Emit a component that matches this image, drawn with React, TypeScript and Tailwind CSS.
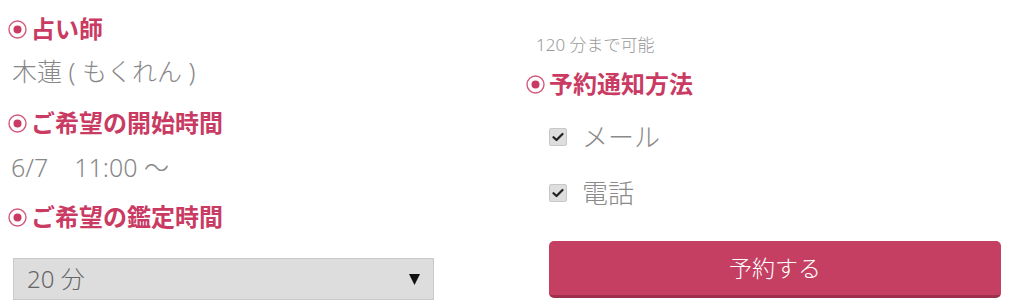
import { ReactNode } from "react"

const FONT = "font-['Noto_Sans','Noto_Sans_CJK_JP',sans-serif]"

function RadioMark() {
  return (
    <svg width="19" height="19" viewBox="0 0 19 19" className="shrink-0">
      <circle cx="9.5" cy="9.5" r="8.5" fill="none" stroke="#d5587c" strokeWidth="1.4" />
      <circle cx="9.5" cy="9.5" r="4" fill="#c93b63" />
    </svg>
  )
}

function Heading({ children, className = "" }: { children: ReactNode; className?: string }) {
  return (
    <div className={`flex items-center gap-[4px] h-[30px] text-[24px] font-bold text-[#c93b63] leading-[30px] ${className}`}>
      <RadioMark />
      <span>{children}</span>
    </div>
  )
}

function Check({ label, className = "" }: { label: string; className?: string }) {
  return (
    <label className={`flex items-center h-[30px] pl-[23px] ${className}`}>
      <span className="flex items-center justify-center w-[18px] h-[18px] bg-[#dedede] border border-[#c8c8c8] rounded-[2px]">
        <svg width="12" height="10" viewBox="0 0 12 10">
          <path d="M1.5 5.2 L4.5 8 L10.5 2" fill="none" stroke="#222" strokeWidth="2.2" strokeLinecap="round" strokeLinejoin="round" />
        </svg>
      </span>
      <span className="ml-[15px] text-[26px] font-light text-[#8a8a8a] leading-[30px]">{label}</span>
    </label>
  )
}

export default function App() {
  return (
    <div className={`flex w-[1024px] h-[308px] bg-white overflow-hidden ${FONT}`}>
      {/* left column */}
      <div className="w-[526px] shrink-0 pl-[8px] pt-[14px]">
        <Heading>占い師</Heading>
        <div className="mt-[12px] pl-[4px] h-[30px] text-[25px] font-light text-[#888] leading-[30px]">
          木蓮 ( もくれん )
        </div>
        <Heading className="mt-[22px]">ご希望の開始時間</Heading>
        <div className="mt-[14px] pl-[3px] h-[30px] flex gap-[26px] text-[25px] font-light text-[#888] leading-[30px]">
          <span>6/7</span>
          <span>11:00 〜</span>
        </div>
        <Heading className="mt-[20px]">ご希望の鑑定時間</Heading>
        <div className="mt-[26px] ml-[5px] w-[421px] h-[42px] flex items-center justify-between bg-[#dddddd] border border-[#c9c9c9] pl-[13px] pr-[13px]">
          <span className="text-[24px] font-light text-[#666] leading-none">20 分</span>
          <svg width="11" height="11" viewBox="0 0 11 11">
            <path d="M0 0 H11 L5.5 11 Z" fill="#111" />
          </svg>
        </div>
      </div>

      {/* right column */}
      <div className="flex-1 pt-[35px]">
        <div className="pl-[10px] h-[20px] text-[17px] font-light text-[#999] leading-[20px]">120 分まで可能</div>
        <Heading className="mt-[14px]">予約通知方法</Heading>
        <Check label="メール" className="mt-[23px]" />
        <Check label="電話" className="mt-[26px]" />
        <button className="mt-[33px] ml-[23px] w-[452px] h-[57px] rounded-[5px] bg-[#c53f62] border-b-[3px] border-[#9e2f4d] text-white text-[23px] font-light leading-none">
          予約する
        </button>
      </div>
    </div>
  )
}
